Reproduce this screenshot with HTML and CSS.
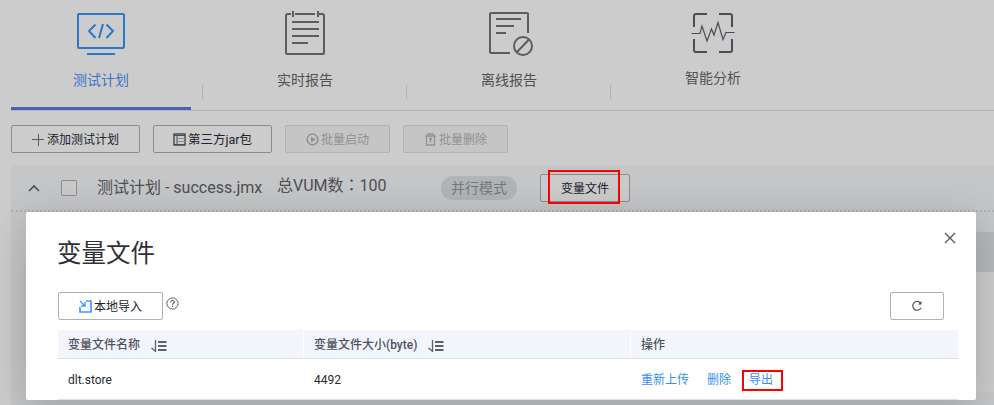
FILE: index.html
```html
<!DOCTYPE html>
<html lang="zh-CN">
<head>
<meta charset="utf-8">
<title>变量文件</title>
<link rel="stylesheet" href="styles.css">
</head>
<body>
<main class="page">
  <nav class="tabs">
    <a class="tab active">
      <svg class="tab-icon" width="52" height="48" viewBox="0 0 52 48" fill="none" stroke="currentColor" stroke-width="2"><rect x="3" y="4" width="46" height="34" rx="1"/><path d="M20.500 14.500 14 21l6.500 7M31.500 14.500 38 21l-6.500 7M28 14l-4 14M12 44h28"/></svg>
      <span>测试计划</span>
    </a>
    <i class="sep"></i>
    <a class="tab">
      <svg class="tab-icon" width="52" height="48" viewBox="0 0 52 48" fill="none" stroke="currentColor" stroke-width="2"><path d="M12 4h-3a2 2 0 0 0-2 2v37a1 1 0 0 0 1 1h36a1 1 0 0 0 1-1V6a2 2 0 0 0-2-2h-3M16 4h20M14 1v6M39 1v6M13 12h27M13 19h27M13 26h27M13 33h16"/></svg>
      <span>实时报告</span>
    </a>
    <i class="sep"></i>
    <a class="tab">
      <svg class="tab-icon" width="52" height="48" viewBox="0 0 52 48" fill="none" stroke="currentColor" stroke-width="2"><path d="M27 43H8a1 1 0 0 1-1-1V4a1 1 0 0 1 1-1h36a1 1 0 0 1 1 1v19M13 9h25M13 16h18M13 23h10M33.500 42.500 46 29.500"/><circle cx="40" cy="36" r="9"/></svg>
      <span>离线报告</span>
    </a>
    <i class="sep"></i>
    <a class="tab smart">
      <svg class="tab-icon" width="52" height="48" viewBox="0 0 52 48" fill="none" stroke="#4c4b57" stroke-width="2"><path d="M20 4H9a2 2 0 0 0-2 2v11M32 4h11a2 2 0 0 1 2 2v11M7 29v11a2 2 0 0 0 2 2h11M45 29v11a2 2 0 0 1-2 2H32"/><path stroke-width="1.200" d="M4.500 23.500H13l2-7.500 5 15 4.500-12 2.500 6 4-12.500 5 17 3-7h8.500"/></svg>
      <span>智能分析</span>
    </a>
  </nav>

  <div class="toolbar">
    <button class="btn add"><svg width="13" height="13" viewBox="0 0 13 13" fill="none" stroke="#55575c" stroke-width="1"><path d="M6.500 1v12M0 6.500h12"/></svg><span>添加测试计划</span></button>
    <button class="btn jar"><svg width="13" height="13" viewBox="0 0 13 13" fill="none" stroke="#494b52"><path stroke-width="1.500" d="M1 1h11v11H1z"/><path d="M1 2.500h11M1 11.500h11M4 3v9"/><path stroke="#8c8e93" d="M4 5.500h8M4 8.500h8"/></svg><span>第三方jar包</span></button>
    <button class="btn batch disabled"><svg width="13" height="13" viewBox="0 0 13 13" fill="none" stroke="currentColor" stroke-width="1.500"><circle cx="6.500" cy="6.500" r="5.400"/><path fill="currentColor" stroke="none" d="M5 3.500v6l4.500-3z"/></svg><span>批量启动</span></button>
    <button class="btn batch disabled"><svg width="13" height="13" viewBox="0 0 13 13" fill="none" stroke="currentColor" stroke-width="1.300"><path d="M1 3h11M4 3V1h5v2M2.500 3v9h8V3M5 5.500h3M6.500 5.500V9.500"/></svg><span>批量删除</span></button>
  </div>

  <section class="plan">
    <header class="plan-head">
      <svg class="chevron" width="12" height="8" viewBox="0 0 12 8" fill="none" stroke="#4f5054" stroke-width="1.600"><path d="m1 7 5-5 5 5"/></svg>
      <span class="check"></span>
      <span class="plan-name">测试计划 - success.jmx</span>
      <span class="vum">总VUM数<span class="colon" lang="zh-TW">：</span>100</span>
      <span class="mode">并行模式</span>
      <button class="btn vars"><span>变量文件</span><i class="mark mark-vars"></i></button>
    </header>
    <div class="plan-body"><div class="strip"></div><div class="content"></div></div>
  </section>
</main>

<section class="dialog">
  <svg class="close" width="12" height="12" viewBox="0 0 12 12" fill="none" stroke="#55575f" stroke-width="1.300"><path d="m1 1 10 10M11 1 1 11"/></svg>
  <h2>变量文件</h2>
  <div class="dialog-bar">
    <button class="btn import"><svg width="13" height="13" viewBox="0 0 13 13" fill="none" stroke="#4597ff" stroke-width="1.700"><path d="M7 1h5v11H1V7"/><path stroke-width="1.300" d="m1 1 5 5M6 2v4H2"/></svg><span>本地导入</span></button>
    <svg class="help" width="13" height="13" viewBox="0 0 13 13" fill="none" stroke="#5b5d61"><circle cx="6.500" cy="6.500" r="5.600"/><path stroke-width="1.200" d="M4.700 5.400c0-2.600 3.700-2.400 3.700-.3 0 1.200-1.800 1.200-1.800 2.700M6.600 8.800V10"/></svg>
    <button class="btn refresh"><svg width="12" height="12" viewBox="0 0 12 12" fill="none" stroke="#4f5158" stroke-width="1.200"><path d="M9.500 3A4.400 4.400 0 1 0 10 8"/><path fill="#4f5158" stroke="none" d="M10.500 1v3.500H7z"/></svg></button>
  </div>
  <div class="row thead">
    <div>变量文件名称<svg class="sort" width="16" height="12" viewBox="0 0 16 12" fill="none" stroke="#5b606a"><path stroke-width="1.300" d="M4.500 0v11.300L.5 8"/><path stroke-width="2" d="M7 2h8.500M7 6h8.500M7 10h8.500"/></svg></div>
    <div>变量文件大小(byte)<svg class="sort" width="16" height="12" viewBox="0 0 16 12" fill="none" stroke="#5b606a"><path stroke-width="1.300" d="M4.500 0v11.300L.5 8"/><path stroke-width="2" d="M7 2h8.500M7 6h8.500M7 10h8.500"/></svg></div>
    <div>操作</div>
  </div>
  <div class="row tbody">
    <div>dlt.store</div>
    <div>4492</div>
    <div class="actions"><a>重新上传</a><a>删除</a><a class="export">导出<i class="mark mark-export"></i></a></div>
  </div>
</section>
</body>
</html>
```
FILE: styles.css
```css
* { box-sizing: border-box; }
body {
  margin: 0;
  width: 994px;
  height: 405px;
  overflow: hidden;
  position: relative;
  background: #ccc;
  color: #4e4f51;
  font: 12px/18px Roboto, "Noto Sans CJK SC", sans-serif;
}
svg { display: block; flex: none; }
.page { padding-left: 11px; }
.tabs {
  display: flex;
  height: 111px;
  border-bottom: 1px solid #b3b3b4;
}
.tab {
  width: 180px;
  height: 110px;
  padding-top: 10px;
  display: flex;
  flex-direction: column;
  align-items: center;
  color: #5c5c5c;
}
.tab span { margin-top: 12px; font-size: 14px; line-height: 20px; color: #505153; }
.tab.smart span { margin-top: 10px; }
.tab.active { color: #2878cb; border-bottom: 3px solid #4862b6; }
.tab.active span { color: #3974c7; }
.sep { width: 1px; height: 14px; margin: 85px 12px 0 11px; background: #b3b3b3; }
.toolbar { display: flex; gap: 13px; padding: 14px 0 12px; }
.btn {
  display: flex;
  align-items: center;
  justify-content: center;
  gap: 2px;
  height: 28px;
  padding: 0;
  border: 1px solid #8c8d92;
  border-radius: 2px;
  background: transparent;
  color: #20222c;
  font: inherit;
  white-space: nowrap;
}
.btn span { padding-top: 2px; }
.add { width: 129px; }
.jar { width: 119px; }
.jar span { font-size: 12.500px; }
.batch { width: 105px; gap: 2px; }
.disabled { background: #c5c5c5; border-color: #b2b2b5; color: #919195; }
.plan { height: 240px; background: #c5c6c8; }
.plan-head {
  display: flex;
  align-items: center;
  height: 47px;
  border-bottom: 2px dotted #b1b2b5;
  font-size: 16px;
  line-height: 24px;
}
.chevron { margin: 0 0 0 17px; }
.check { width: 16px; height: 16px; margin: 0 20px 0 21px; border: 1px solid #8b8c91; border-radius: 2px; background: #cacaca; }
.plan-name { width: 180px; white-space: nowrap; }
.vum { width: 164px; margin-top: -4px; white-space: nowrap; }
.colon { font-family: "Noto Sans CJK TC", sans-serif; line-height: 1; }
.mode {
  width: 76px;
  height: 24px;
  border-radius: 12px;
  background: #b0b5b6;
  color: #76797b;
  font-size: 14px;
  text-align: center;
}
.vars { position: relative; width: 90px; margin: 0 0 0 23px; background: #cbcbcb; font-size: 12px; }
.mark { position: absolute; border: 2px solid #f00; }
.mark-vars { left: 7px; top: -5px; width: 72px; height: 34px; }
.plan-body { padding: 20px 0 0 30px; }
.strip { height: 40px; background: #b5b9ba; }
.content { height: 120px; background: #ccc; }
.dialog {
  position: absolute;
  left: 26px;
  top: 212px;
  width: 950px;
  height: 188px;
  padding: 26px 18px 0 32px;
  background: #fff;
  border-radius: 2px;
  box-shadow: 0 8px 40px rgba(0, 0, 0, .2);
}
.close { position: absolute; right: 20px; top: 20px; }
h2 { margin: 0 0 0 -1px; font-size: 24.500px; line-height: 32px; font-weight: 400; color: #303136; }
.dialog-bar { display: flex; align-items: flex-start; padding: 22px 14px 10px 0; }
.dialog-bar .btn { border-color: #adafb9; }
.import { width: 105px; }
.help { margin: 5px 0 0 3px; }
.refresh { width: 54px; margin-left: auto; }
.row { display: grid; grid-template-columns: 246px 327px 1fr; }
.row > div { display: flex; align-items: center; padding: 2px 0 0 10px; }
.thead { height: 29px; background: #f2f5fc; border-bottom: 1px solid #dcdfe6; color: #4e5260; font-weight: 500; }
.thead > div + div { border-left: 1px solid #fff; margin-left: -1px; }
.sort { margin: 1px 0 0 11px; }
.tbody { height: 41px; border-bottom: 1px solid #dcdfe6; color: #292b33; }
.actions { color: #3690f8; }
.actions a + a { margin-left: 18px; }
.export { position: relative; }
.mark-export { left: -7px; top: -1px; width: 41px; height: 21px; }
```
